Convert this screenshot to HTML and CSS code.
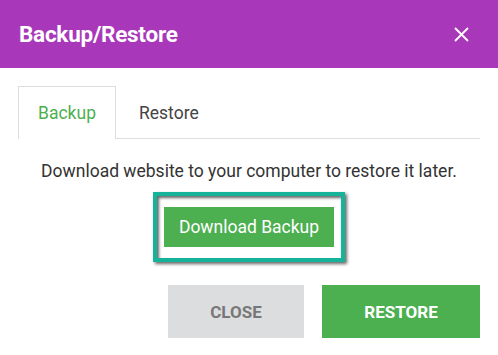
FILE: index.html
```html
<!DOCTYPE html>
<html lang="en">
<head>
    <meta charset="UTF-8" />
    <title>Backup/Restore</title>
    <link rel="stylesheet" href="styles.css">
</head>
<body>

<div class="modal">
    <header class="modal-header">
        <h1>Backup/Restore</h1>
        <button class="close-x" aria-label="Close">
            <svg width="15" height="15" viewBox="0 0 15 15"><path d="M1 1L14 14M14 1L1 14" stroke="#fff" stroke-width="1.8" fill="none"/></svg>
        </button>
    </header>

    <div class="modal-body">
        <div class="tabs">
            <div class="tab active">Backup</div>
            <div class="tab">Restore</div>
        </div>

        <p class="info">Download website to your computer to restore it later.</p>

        <div class="download-wrap">
            <div class="focus-ring">
                <button class="download-btn">Download Backup</button>
            </div>
        </div>

        <div class="actions">
            <button class="btn btn-close">CLOSE</button>
            <button class="btn btn-restore">RESTORE</button>
        </div>
    </div>
</div>

</body>
</html>
```

FILE: styles.css
```css
* { box-sizing: border-box; }
body {
  margin: 0;
  font-family: Roboto, 'Liberation Sans', sans-serif;
  background: #fff;
  color: #333;
}

.modal { width: 498px; height: 355px; background: #fff; }

.modal-header {
  height: 68px;
  background: #a838b9;
  display: flex;
  align-items: center;
  justify-content: space-between;
  padding: 0 29px 0 19px;
}
.modal-header h1 {
  margin: 0;
  color: #fff;
  font-size: 22.5px;
  font-weight: 700;
  letter-spacing: -0.25px;
}
.close-x {
  border: none;
  background: none;
  padding: 0;
  width: 15px;
  height: 15px;
  display: flex;
  cursor: pointer;
}

.modal-body { padding: 18px 18px 0 18px; }

.tabs {
  display: flex;
  border-bottom: 1px solid #ddd;
  height: 53px;
}
.tab {
  padding: 0 20px;
  font-size: 17.5px;
  color: #444;
  display: flex;
  align-items: center;
  height: 53px;
  border: 1px solid transparent;
  border-bottom: none;
}
.tab.active {
  color: #4caf50;
  border-color: #ddd;
  background: #fff;
  width: 98px;
  justify-content: center;
}
.tab + .tab { padding-left: 22px; }

.info {
  margin: 22px 0 0 0;
  text-align: center;
  font-size: 17.5px;
  color: #333;
}

.download-wrap {
  display: flex;
  justify-content: center;
  margin-top: 11px;
}
.focus-ring {
  border: 4px solid #14b39a;
  padding: 11px 7px;
  box-shadow: 2px 2px 3px rgba(0,0,0,0.6), inset 2px 2px 3px rgba(0,0,0,0.6);
}
.download-btn {
  display: block;
  width: 170px;
  height: 40px;
  border: none;
  background: #4caf50;
  color: #fff;
  font-family: Roboto, 'Liberation Sans', sans-serif;
  font-size: 17.5px;
  cursor: pointer;
}

.actions {
  display: flex;
  justify-content: flex-end;
  gap: 18px;
  margin-top: 23px;
}
.btn {
  height: 53px;
  border: none;
  font-family: Roboto, 'Liberation Sans', sans-serif;
  font-size: 17px;
  font-weight: 700;
  cursor: pointer;
}
.btn-close { width: 136px; background: #dcdddf; color: #777; }
.btn-restore { width: 158px; background: #4caf50; color: #fff; }
```
